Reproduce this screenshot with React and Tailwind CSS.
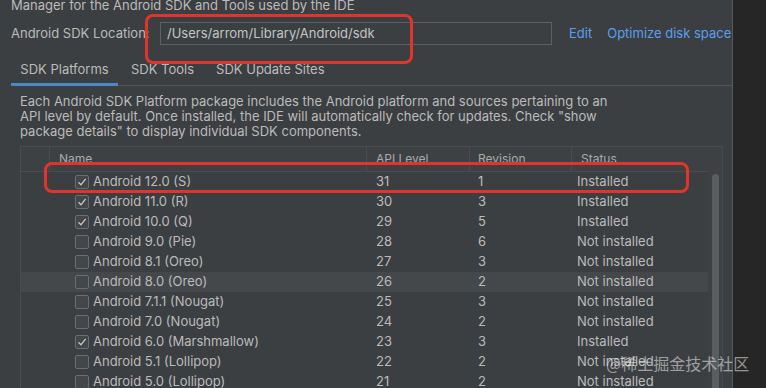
const rows = [
    { name: "Android 12.0 (S)", api: 31, rev: 1, status: "Installed", checked: true },
    { name: "Android 11.0 (R)", api: 30, rev: 3, status: "Installed", checked: true },
    { name: "Android 10.0 (Q)", api: 29, rev: 5, status: "Installed", checked: true },
    { name: "Android 9.0 (Pie)", api: 28, rev: 6, status: "Not installed" },
    { name: "Android 8.1 (Oreo)", api: 27, rev: 3, status: "Not installed" },
    { name: "Android 8.0 (Oreo)", api: 26, rev: 2, status: "Not installed", hover: true },
    { name: "Android 7.1.1 (Nougat)", api: 25, rev: 3, status: "Not installed" },
    { name: "Android 7.0 (Nougat)", api: 24, rev: 2, status: "Not installed" },
    { name: "Android 6.0 (Marshmallow)", api: 23, rev: 3, status: "Installed", checked: true },
    { name: "Android 5.1 (Lollipop)", api: 22, rev: 2, status: "Not installed" },
    { name: "Android 5.0 (Lollipop)", api: 21, rev: 2, status: "Not installed" },
];

function Checkbox({ checked }) {
    return (
        <div className="w-[14px] h-[14px] border border-[#6b6e70] rounded-[2px] bg-[#43474a] flex items-center justify-center">
            {checked && (
                <svg width="10" height="10" viewBox="0 0 10 10">
                    <path d="M1.5 5.2 L4 7.8 L8.6 1.8" fill="none" stroke="#c8c8c8" strokeWidth="1.3" />
                </svg>
            )}
        </div>
    );
}

export default function App() {
    return (
        <div className="relative w-[766px] h-[388px] overflow-hidden flex text-[13px] text-[#bbbbbb] font-['Inter','Noto_Sans',sans-serif]">
            {/* Main panel */}
            <div className="w-[733px] h-full bg-[#3c3f41] border-r border-[#58595b] flex flex-col overflow-hidden">
                <div className="shrink-0 pl-[11px] mt-[-3px] h-[16px] leading-[16px]">
                    Manager for the Android SDK and Tools used by the IDE
                </div>

                {/* Location row */}
                <div className="shrink-0 flex items-center mt-[9px] h-[23px]">
                    <span className="pl-[11px] w-[160px]">Android SDK Location:</span>
                    <div className="w-[392px] h-[23px] border border-[#5e6163] flex items-center pl-[6px] text-[#c4c4c4]">
                        /Users/arrom/Library/Android/sdk
                    </div>
                    <span className="ml-[17px] text-[#5a9ef0]">Edit</span>
                    <span className="ml-[15px] text-[#5a9ef0]">Optimize disk space</span>
                </div>

                {/* Tabs */}
                <div className="shrink-0 mt-[15px] ml-[11px] flex border-b border-[#515355] h-[26px]">
                    <div className="w-[107px] flex items-start justify-center border-b-[3px] border-[#4a88c7] mb-[-1px]">
                        SDK Platforms
                    </div>
                    <div className="ml-[13px]">SDK Tools</div>
                    <div className="ml-[22px]">SDK Update Sites</div>
                </div>

                {/* Description */}
                <div className="shrink-0 pl-[20px] mt-[8px] leading-[15px]">
                    Each Android SDK Platform package includes the Android platform and sources pertaining to an<br />
                    API level by default. Once installed, the IDE will automatically check for updates. Check "show<br />
                    package details" to display individual SDK components.
                </div>

                {/* Table */}
                <div className="shrink-0 ml-[20px] mt-[7px] w-[703px] h-[260px] border-t border-l border-[#4a4d4f] flex">
                    <div className="w-[688px] flex flex-col">
                        <div className="shrink-0 flex h-[25px] border-b border-[#4a4d4f] text-[12px] text-[#a9a9a9] leading-[24px] bg-[#3e4143]">
                            <div className="w-[29px] border-r border-[#4a4d4f]" />
                            <div className="w-[317px] border-r border-[#4a4d4f] pl-[9px]">Name</div>
                            <div className="w-[103px] border-r border-[#4a4d4f] pl-[9px]">API Level</div>
                            <div className="w-[102px] border-r border-[#4a4d4f] pl-[8px]">Revision</div>
                            <div className="flex-1 pl-[9px]">Status</div>
                        </div>
                        {rows.map((r) => (
                            <div key={r.name} className={`shrink-0 flex h-[20px] items-center ${r.hover ? "bg-[#45484a]" : ""}`}>
                                <div className="w-[29px]" />
                                <div className="w-[317px] flex items-center pl-[25px]">
                                    <Checkbox checked={r.checked} />
                                    <span className="ml-[4px]">{r.name}</span>
                                </div>
                                <div className="w-[103px] pl-[9px]">{r.api}</div>
                                <div className="w-[102px] pl-[8px]">{r.rev}</div>
                                <div className="flex-1 pl-[5px]">{r.status}</div>
                            </div>
                        ))}
                    </div>
                    {/* Scrollbar */}
                    <div className="w-[15px] flex flex-col bg-[#3e4143] border-r border-[#46494b]">
                        <div className="h-[27px]" />
                        <div className="ml-[4px] w-[7px] flex-1 rounded-t-[4px] bg-[#5b5e60]" />
                    </div>
                </div>
            </div>
            <div className="flex-1 h-full bg-[#262626]" />

            {/* Annotation boxes */}
            <div className="absolute left-[145px] top-[14px] w-[268px] h-[50px] border-[3px] border-[#e3342b] rounded-[8px]" />
            <div className="absolute left-[44px] top-[162px] w-[645px] h-[31px] border-[3px] border-[#e3342b] rounded-[8px]" />

            {/* Watermark */}
            <div className="absolute left-[606px] top-[351px] text-[16px] leading-[24px] text-white/50 font-['Noto_Sans_CJK_SC',sans-serif]">
                @稀土掘金技术社区
            </div>
        </div>
    );
}
